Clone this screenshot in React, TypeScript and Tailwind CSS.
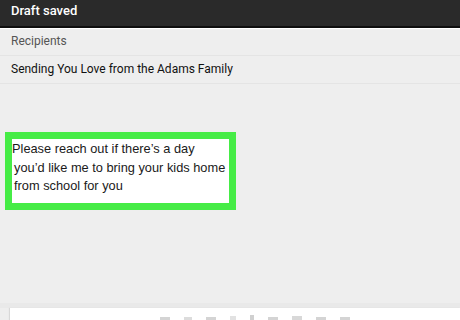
export default function App() {
  return (
    <div className="w-[460px] h-[320px] overflow-hidden bg-[#eeeeee] flex flex-col" style={{ fontFamily: 'Roboto, "Liberation Sans", sans-serif' }}>
      {/* Header */}
      <div className="h-[26px] bg-[#2a2a2a] flex items-center pb-[4px] px-[11px] text-white text-[13px] font-medium shrink-0">
        Draft saved
      </div>
      <div className="h-[2px] bg-[#0e0e0e] shrink-0" />
      <div className="h-[1px] bg-white shrink-0" />

      {/* Fields */}
      <div className="h-[27px] flex items-center pb-[2px] px-[11px] text-[12px] text-[#555555] border-b border-[#e4e4e4] shrink-0">
        Recipients
      </div>
      <div className="h-[28px] flex items-center pb-[1px] px-[11px] text-[12px] text-[#111111] border-b border-[#e4e4e4] shrink-0">
        Sending You Love from the Adams Family
      </div>

      {/* Body with highlight */}
      <div className="pt-[48px] pl-[5px] shrink-0">
        <div className="w-[231px] h-[78px] bg-[#46ec46] p-[7px]">
          <div
            className="bg-white h-full pt-[1px] text-[12.8px] leading-[18.5px] text-[#1a1a1a]"
            style={{ fontFamily: '"Liberation Sans", Arial, sans-serif' }}
          >
            <div>Please reach out if there’s a day</div>
            <div className="pl-[2px]">you’d like me to bring your kids home</div>
            <div className="pl-[2px]">from school for you</div>
          </div>
        </div>
      </div>

      <div className="flex-1" />

      {/* Bottom toolbar */}
      <div className="h-[5px] bg-[#e9e9e9] shrink-0" />
      <div className="h-[12px] ml-[10px] bg-white shadow-[-1px_0_1px_#d8d8d8] flex items-end gap-[14px] pl-[150px] shrink-0">
        <div className="w-[10px] h-[3px] bg-[#d4d4d4]" />
        <div className="w-[8px] h-[3px] bg-[#dcdcdc]" />
        <div className="w-[10px] h-[3px] bg-[#d4d4d4]" />
        <div className="w-[6px] h-[4px] bg-[#e2e2e2]" />
        <div className="w-[4px] h-[5px] bg-[#d0d0d0]" />
        <div className="w-[10px] h-[3px] bg-[#d4d4d4]" />
        <div className="w-[10px] h-[4px] bg-[#d8d8d8]" />
        <div className="w-[10px] h-[3px] bg-[#d4d4d4]" />
        <div className="w-[10px] h-[3px] bg-[#d4d4d4]" />
      </div>
    </div>
  );
}
